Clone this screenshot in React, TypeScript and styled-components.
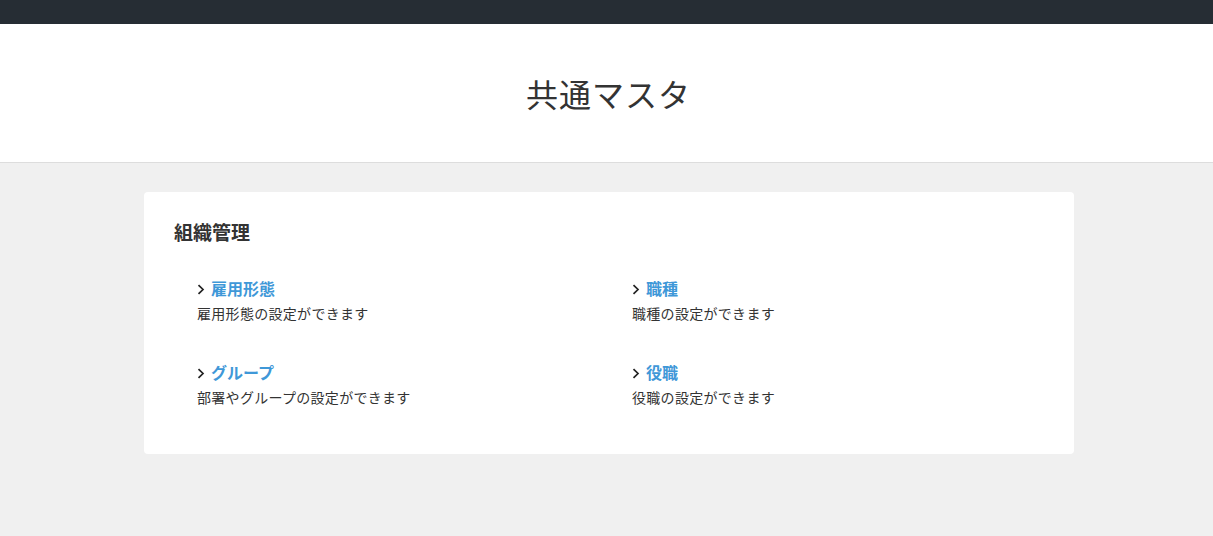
import styled, { createGlobalStyle } from 'styled-components';

const GlobalStyle = createGlobalStyle`
  html, body {
    margin: 0;
    padding: 0;
    background: #f0f0f0;
    font-family: "Noto Sans", "Noto Sans CJK JP", sans-serif;
    color: #333333;
  }
`;

interface MasterItem {
  name: string;
  description: string;
}

const items: MasterItem[] = [
  { name: '雇用形態', description: '雇用形態の設定ができます' },
  { name: '職種', description: '職種の設定ができます' },
  { name: 'グループ', description: '部署やグループの設定ができます' },
  { name: '役職', description: '役職の設定ができます' }
];

function Chevron() {
  return (
    <ChevronIcon width='8' height='11' viewBox='0 0 8 11'>
      <path d='M1.5 1.2 L6 5.5 L1.5 9.8' fill='none' stroke='#222' strokeWidth='1.7' />
    </ChevronIcon>
  );
}

export default function App() {
  return (
    <>
      <GlobalStyle />
      <TopBar />
      <Header>
        <PageTitle>共通マスタ</PageTitle>
      </Header>
      <Main>
        <Card>
          <SectionTitle>組織管理</SectionTitle>
          <ItemGrid>
            {items.map((item) => (
              <Item key={item.name}>
                <ItemLink href='#'>
                  <Chevron />
                  {item.name}
                </ItemLink>
                <ItemDescription>{item.description}</ItemDescription>
              </Item>
            ))}
          </ItemGrid>
        </Card>
      </Main>
    </>
  );
}

const TopBar = styled.div`
  height: 24px;
  background-color: #262d34;
`;

const Header = styled.header`
  height: 138px;
  background-color: #ffffff;
  border-bottom: 1px solid #dddddd;
  display: flex;
  align-items: center;
  justify-content: center;
  padding-left: 4px;
`;

const PageTitle = styled.h1`
  margin: 0;
  font-size: 32px;
  font-weight: normal;
  color: #333333;
  letter-spacing: 1px;
`;

const Main = styled.main`
  padding: 29px 0 40px 5px;
  display: flex;
  justify-content: center;
`;

const Card = styled.section`
  box-sizing: border-box;
  width: 930px;
  background-color: #ffffff;
  border-radius: 4px;
  padding: 28px 30px 45px;
`;

const SectionTitle = styled.h2`
  margin: 0;
  font-size: 19px;
  font-weight: bold;
  color: #333333;
  line-height: 26px;
`;

const ItemGrid = styled.div`
  display: grid;
  grid-template-columns: 1fr 1fr;
  row-gap: 35px;
  margin-top: 30px;
`;

const Item = styled.div`
  padding-left: 23px;
`;

const ItemLink = styled.a`
  display: inline-flex;
  align-items: center;
  gap: 6px;
  font-size: 16px;
  font-weight: bold;
  line-height: 26px;
  color: #3f98d8;
  text-decoration: none;
`;

const ChevronIcon = styled.svg`
  flex-shrink: 0;
`;

const ItemDescription = styled.p`
  margin: 0;
  font-size: 14px;
  line-height: 23px;
  letter-spacing: 0.3px;
  color: #333333;
`;
